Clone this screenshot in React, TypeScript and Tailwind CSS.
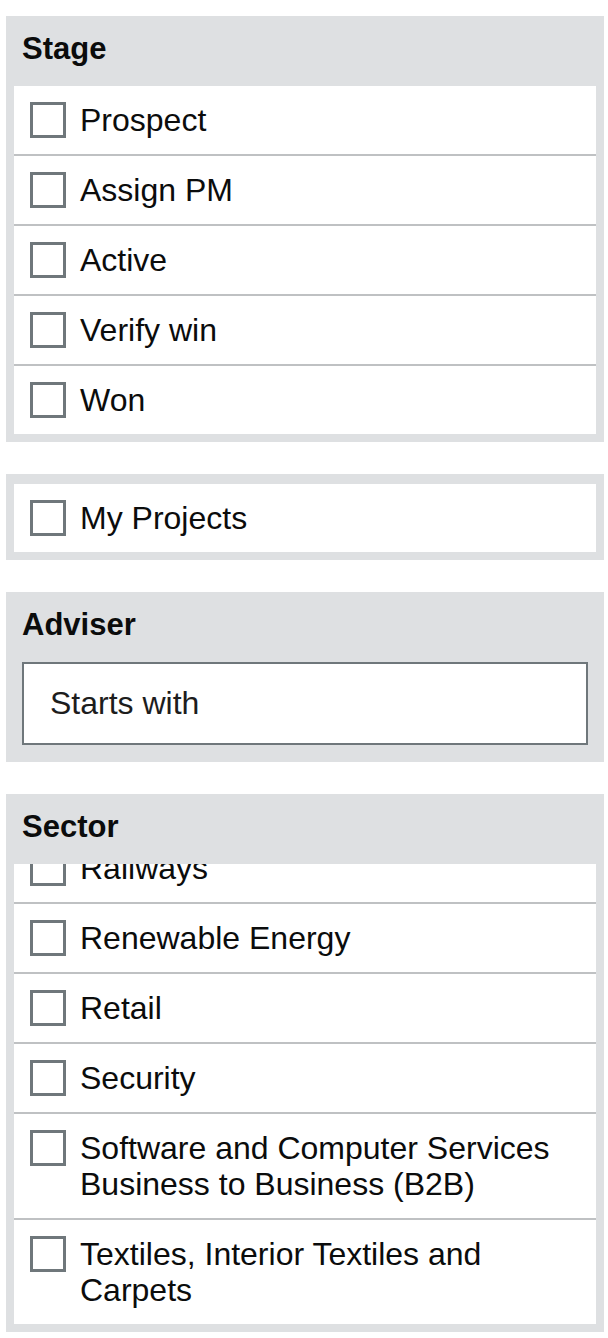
import { useLayoutEffect, useRef } from "react";

const STAGES = ["Prospect", "Assign PM", "Active", "Verify win", "Won"];

const SECTORS = [
  "Ports and Logistics",
  "Power",
  "Railways",
  "Renewable Energy",
  "Retail",
  "Security",
  "Software and Computer Services Business to Business (B2B)",
  "Textiles, Interior Textiles and Carpets",
];

function CheckRow({ label, first }: { label: string; first?: boolean }) {
  return (
    <label
      className={`flex items-start gap-[14px] px-4 py-4 bg-white ${
        first ? "" : "border-t-2 border-[#bfc1c3]"
      }`}
    >
      <span className="shrink-0 w-[36px] h-[36px] border-[3px] border-[#6f777b] bg-white" />
      <span className="text-[32px] leading-[36px] text-[#0b0c0c]">{label}</span>
    </label>
  );
}

function PanelHeader({ title }: { title: string }) {
  return (
    <h3 className="h-[70px] pt-[15px] px-4 text-[31px] leading-[36px] font-bold text-[#0b0c0c]">
      {title}
    </h3>
  );
}

export default function App() {
  const sectorRef = useRef<HTMLDivElement | null>(null);

  // sector list sits scrolled to the bottom
  useLayoutEffect(() => {
    const el = sectorRef.current;
    if (el) el.scrollTop = el.scrollHeight;
  }, []);

  return (
    <div
      className="min-h-[1338px] bg-white pt-4 pl-[6px] pr-[4px] flex flex-col gap-8"
      style={{ fontFamily: '"Liberation Sans", Arial, sans-serif' }}
    >
      <section className="bg-[#dee0e2] pb-2">
        <PanelHeader title="Stage" />
        <div className="mx-2">
          {STAGES.map((s, i) => (
            <CheckRow key={s} label={s} first={i === 0} />
          ))}
        </div>
      </section>

      <section className="bg-[#dee0e2] pt-[10px] pb-2 px-2">
        <CheckRow label="My Projects" first />
      </section>

      <section className="bg-[#dee0e2] pb-[17px]">
        <PanelHeader title="Adviser" />
        <div className="px-4">
          <input
            type="text"
            placeholder="Starts with"
            className="w-full h-[83px] border-2 border-[#6f777b] bg-white pl-[26px] text-[32px] text-[#0b0c0c] placeholder:text-[#1d1d1d] outline-none"
          />
        </div>
      </section>

      <section className="bg-[#dee0e2] pb-2">
        <PanelHeader title="Sector" />
        <div ref={sectorRef} className="mx-2 h-[460px] overflow-hidden bg-white">
          {SECTORS.map((s, i) => (
            <CheckRow key={s} label={s} first={i === 0} />
          ))}
        </div>
      </section>
    </div>
  );
}
